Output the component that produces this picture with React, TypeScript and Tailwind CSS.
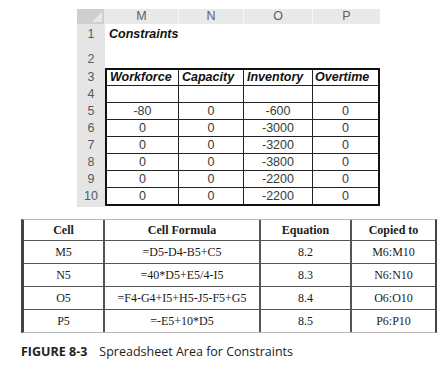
import React from "react";

const arial = { fontFamily: '"Liberation Sans", Arial, sans-serif' };
const times = { fontFamily: '"Liberation Serif", "Times New Roman", serif' };
const caption = { fontFamily: '"Open Sans", "Noto Sans", sans-serif' };

const rowLabels: { label: string; h: string; align: string }[] = [
  { label: "1", h: "h-[20px]", align: "items-center" },
  { label: "2", h: "h-[24px]", align: "items-end pb-[1px]" },
  { label: "3", h: "h-[18px]", align: "items-center" },
  { label: "4", h: "h-[17px]", align: "items-center" },
  { label: "5", h: "h-[17px]", align: "items-center" },
  { label: "6", h: "h-[17px]", align: "items-center" },
  { label: "7", h: "h-[17px]", align: "items-center" },
  { label: "8", h: "h-[17px]", align: "items-center" },
  { label: "9", h: "h-[17px]", align: "items-center" },
  { label: "10", h: "h-[19px]", align: "items-center pb-[2px]" },
];

const data: string[][] = [
  ["-80", "0", "-600", "0"],
  ["0", "0", "-3000", "0"],
  ["0", "0", "-3200", "0"],
  ["0", "0", "-3800", "0"],
  ["0", "0", "-2200", "0"],
  ["0", "0", "-2200", "0"],
];

const formulas: string[][] = [
  ["M5", "=D5-D4-B5+C5", "8.2", "M6:M10"],
  ["N5", "=40*D5+E5/4-I5", "8.3", "N6:N10"],
  ["O5", "=F4-G4+I5+H5-J5-F5+G5", "8.4", "O6:O10"],
  ["P5", "=-E5+10*D5", "8.5", "P6:P10"],
];

function Sheet() {
  return (
    <div className="flex ml-[77px] pt-[9px] w-[303px]" style={arial}>
      <div className="w-[28px] flex flex-col">
        <div className="h-[15px] bg-[#cfcfcf] relative border-r border-[#e8e8e8]">
          <svg className="absolute right-[2px] bottom-[2px]" width="10" height="10" viewBox="0 0 10 10">
            <polygon points="10,0 10,10 0,10" fill="#e9e9e9" />
          </svg>
        </div>
        <div className="flex flex-col bg-[#e5e5e5]">
          {rowLabels.map((r) => (
            <div
              key={r.label}
              className={`${r.h} ${r.align} flex justify-center text-[12.5px] leading-[15px] text-[#5a5a5a]`}
            >
              {r.label}
            </div>
          ))}
        </div>
      </div>
      <div className="flex-1 flex flex-col">
        <div className="h-[15px] grid grid-cols-[73px_65px_69px_68px] bg-[#e9e9e9] text-[12.5px] leading-[15px] text-[#606060]">
          <div className="text-center">M</div>
          <div className="text-center border-l border-[#f7f7f7]">N</div>
          <div className="text-center border-l border-[#f7f7f7]">O</div>
          <div className="text-center border-l border-[#f7f7f7]">P</div>
        </div>
        <div className="h-[20px] flex items-center pl-[4px] text-[12.5px] font-bold italic text-[#111]">
          Constraints
        </div>
        <div className="h-[24px]" />
        <div className="border-2 border-[#111] w-[275px]">
          <div className="grid grid-cols-[71px_65px_69px_66px] h-[16px] border-b border-[#222] text-[12.5px] leading-[15px] font-bold italic text-[#111]">
            <div className="pl-[3px]">Workforce</div>
            <div className="pl-[3px] border-l border-[#222]">Capacity</div>
            <div className="pl-[3px] border-l border-[#222]">Inventory</div>
            <div className="pl-[2px] border-l border-[#222]">Overtime</div>
          </div>
          <div className="grid grid-cols-[71px_65px_69px_66px] h-[17px] border-b border-[#222]">
            <div />
            <div className="border-l border-[#222]" />
            <div className="border-l border-[#222]" />
            <div className="border-l border-[#222]" />
          </div>
          {data.map((row, i) => (
            <div
              key={i}
              className={`grid grid-cols-[71px_65px_69px_66px] ${
                i < data.length - 1 ? "h-[17px] border-b border-[#222]" : "h-[16px]"
              } text-[12.5px] leading-[16px] text-[#3a3a3a]`}
            >
              {row.map((v, j) => (
                <div key={j} className={`text-center ${j > 0 ? "border-l border-[#222]" : ""}`}>
                  {v}
                </div>
              ))}
            </div>
          ))}
        </div>
      </div>
    </div>
  );
}

function FormulaTable() {
  return (
    <div
      className="ml-[21px] mt-[12px] w-[416px] border-l-[3px] border-r-2 border-l-[#444] border-r-[#444] border-t border-b border-t-[#b5b5b5] border-b-[#b5b5b5] text-[12px] text-[#1a1a1a]"
      style={times}
    >
      <div className="grid grid-cols-[79px_156px_91px_85px] h-[21px] border-b border-[#555] font-bold">
        <div className="flex items-center justify-center">Cell</div>
        <div className="flex items-center justify-center border-l-2 border-[#555]">Cell Formula</div>
        <div className="flex items-center justify-center border-l-2 border-[#555]">Equation</div>
        <div className="flex items-center justify-center border-l-2 border-[#555]">Copied to</div>
      </div>
      {formulas.map((row, i) => (
        <div
          key={i}
          className={`grid grid-cols-[79px_156px_91px_85px] ${
            i < formulas.length - 1 ? "h-[23px] border-b border-[#555]" : "h-[22px]"
          }`}
        >
          {row.map((v, j) => (
            <div
              key={j}
              className={`flex items-center justify-center ${j > 0 ? "border-l-2 border-[#555]" : ""}`}
            >
              {v}
            </div>
          ))}
        </div>
      ))}
    </div>
  );
}

export default function App() {
  return (
    <div className="w-[445px] h-[370px] bg-white overflow-hidden">
      <Sheet />
      <FormulaTable />
      <div className="ml-[21px] mt-[11px] flex text-[12.5px] leading-[16px] text-[#222]" style={caption}>
        <span className="font-bold">FIGURE 8-3</span>
        <span className="ml-[12px]">Spreadsheet Area for Constraints</span>
      </div>
    </div>
  );
}
